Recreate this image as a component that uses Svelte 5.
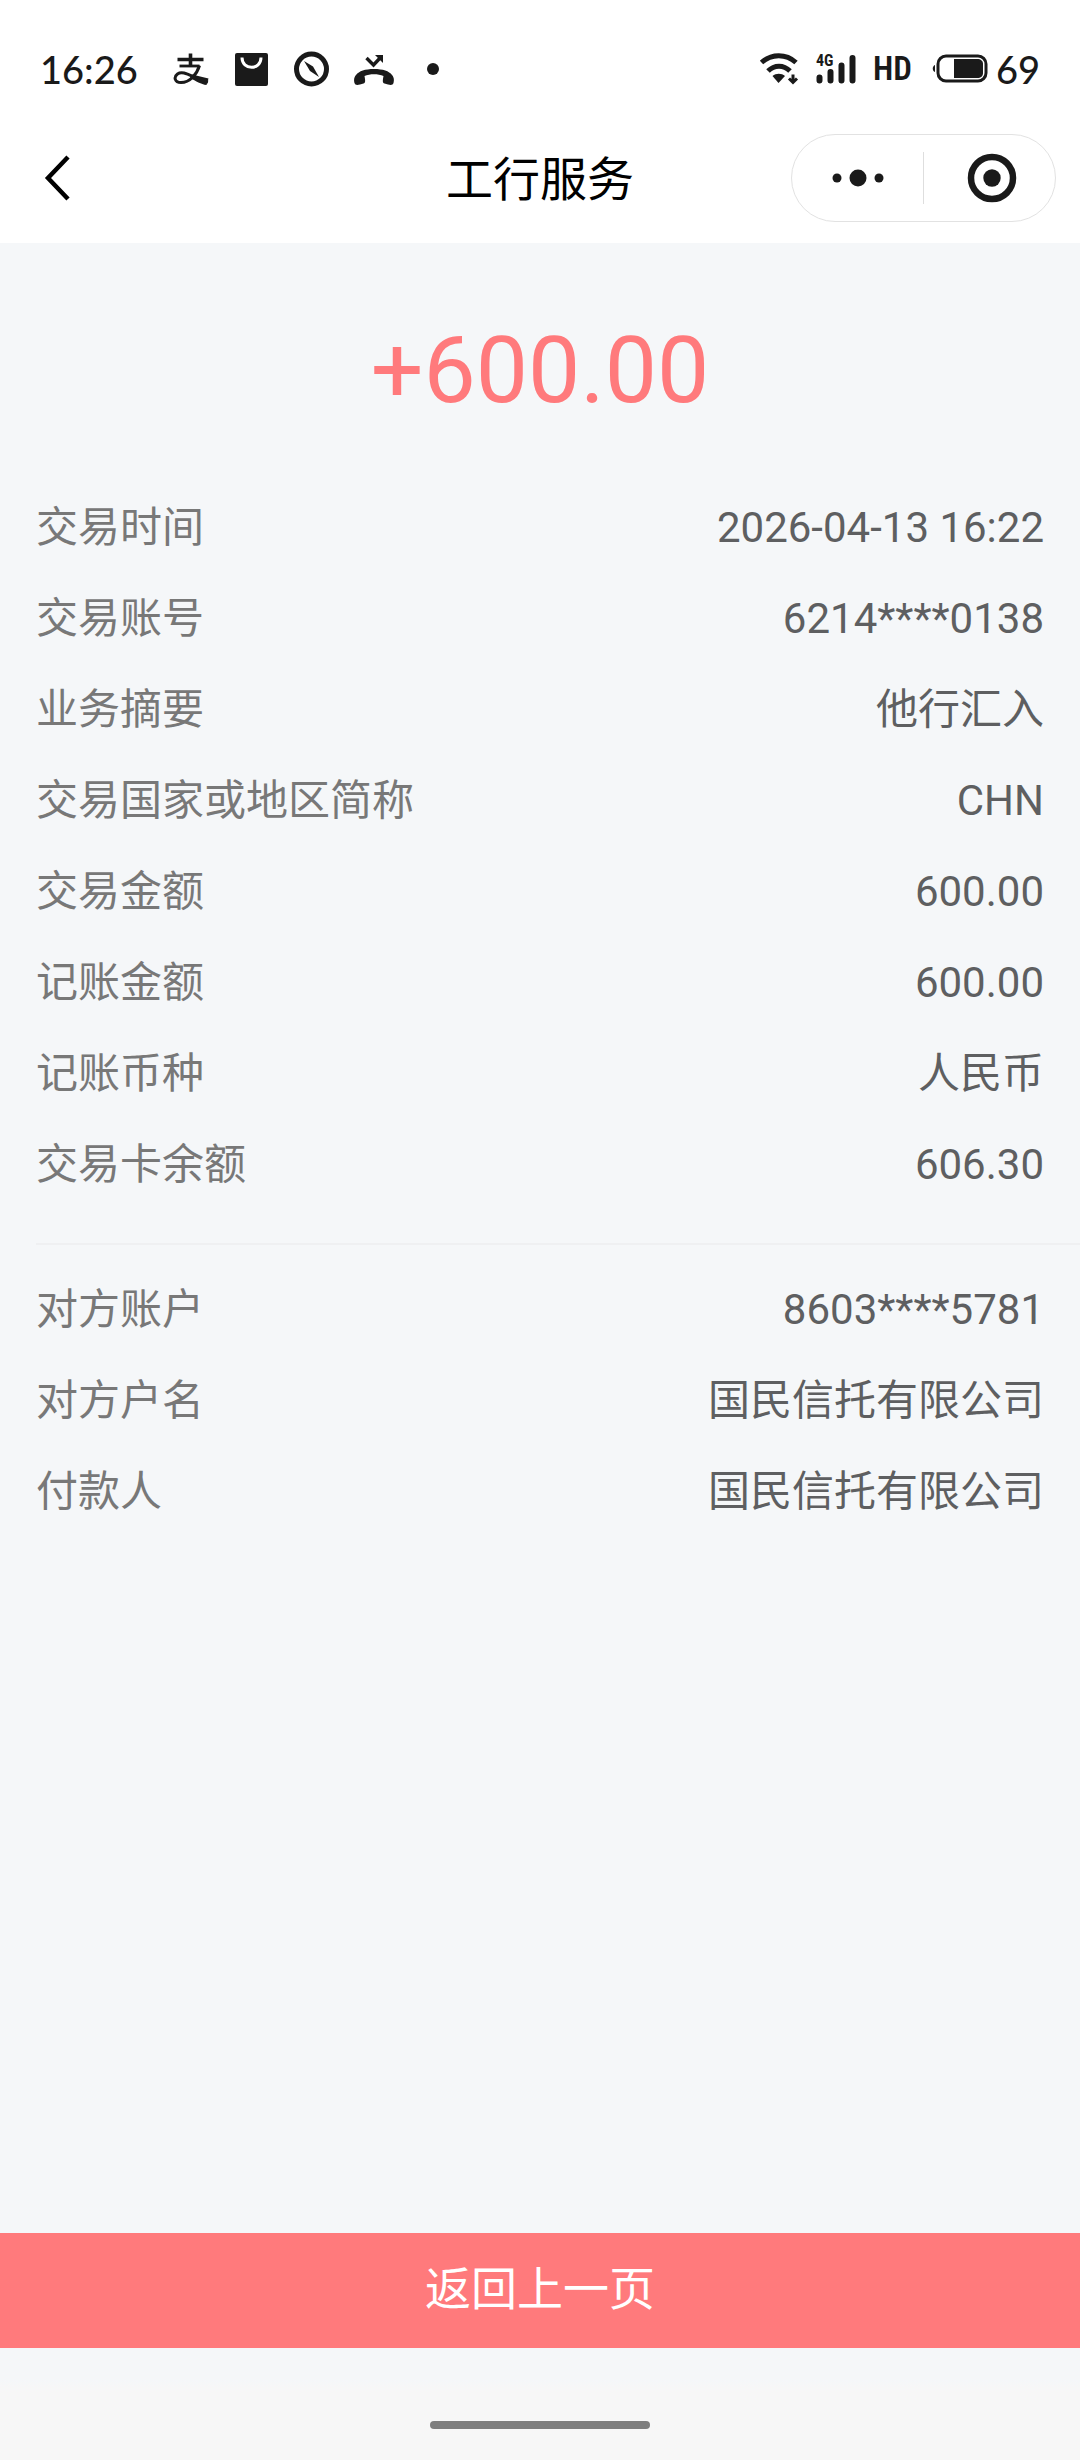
<script lang="ts">
  interface Row {
    label: string
    value: string
  }

  const title = '工行服务'
  const amount = '+600.00'

  const transactionRows: Row[] = [
    { label: '交易时间', value: '2026-04-13 16:22' },
    { label: '交易账号', value: '6214****0138' },
    { label: '业务摘要', value: '他行汇入' },
    { label: '交易国家或地区简称', value: 'CHN' },
    { label: '交易金额', value: '600.00' },
    { label: '记账金额', value: '600.00' },
    { label: '记账币种', value: '人民币' },
    { label: '交易卡余额', value: '606.30' }
  ]

  const counterpartyRows: Row[] = [
    { label: '对方账户', value: '8603****5781' },
    { label: '对方户名', value: '国民信托有限公司' },
    { label: '付款人', value: '国民信托有限公司' }
  ]

  function goBack() {
    history.back()
  }
</script>

{#snippet rowList(rows: Row[])}
  <dl class="rows">
    {#each rows as row (row.label)}
      <div class="row">
        <dt>{row.label}</dt>
        <dd>{row.value}</dd>
      </div>
    {/each}
  </dl>
{/snippet}

<div class="page">
  <div class="status-bar">
    <div class="status-left">
      <span class="clock">16:26</span>
      <svg width="36" height="36" viewBox="0 0 36 36" fill="none" stroke="#1a1a1a" aria-hidden="true">
        <path d="M4.500 8.500h26M17.500 2.500v13" stroke-width="3.600" />
        <path d="M6.500 15h20" stroke-width="2.800" />
        <path
          d="M26.500 14.500C24 23 17 31.500 8 31.500C1.500 31.500 0.500 26 4.500 23C11 18.500 20 27.500 35 31"
          stroke-width="3"
        />
        <path d="M19 23.500L35.500 27.500L33.500 34C28 33.500 23 30 17 27Z" fill="#1a1a1a" stroke="none" />
      </svg>
      <svg width="36" height="36" viewBox="0 0 36 36" aria-hidden="true">
        <rect x="2" y="2" width="33" height="33" rx="2" fill="#1a1a1a" />
        <path d="M9 6.500c0 13 19 13 19 0" fill="none" stroke="#fff" stroke-width="3" />
      </svg>
      <svg width="36" height="36" viewBox="0 0 36 36" aria-hidden="true">
        <circle cx="18.500" cy="18" r="15" fill="none" stroke="#1a1a1a" stroke-width="5" />
        <path d="M11 10L20 15.500L26 26L17 20Z" fill="#1a1a1a" />
      </svg>
      <svg width="42" height="36" viewBox="0 0 42 36" aria-hidden="true">
        <path
          d="M21 18C30 18 36 20 39 24C41.500 27 41 30 40.500 32C40 34 38 34.500 35 33.500L31.500 32.500C29.500 32 29.500 30 30.500 25C25 22.500 17 22.500 11.500 25C12.500 30 12.500 32 10.500 32.500L7 33.500C4 34.500 2 34 1.500 32C1 30 0.500 27 3 24C6 20 12 18 21 18Z"
          fill="#1a1a1a"
        />
        <path d="M13.500 7l7 7L28 6" fill="none" stroke="#1a1a1a" stroke-width="3.400" />
        <path d="M22 4h8v8Z" fill="#1a1a1a" />
      </svg>
      <span class="more-dot"></span>
    </div>

    <div class="status-right">
      <svg width="40" height="36" viewBox="0 0 40 36" fill="none" aria-hidden="true">
        <path d="M2.500 11.500C12.500 2.500 27 2.500 37 11.500" stroke="#1a1a1a" stroke-width="5" />
        <path d="M9 20C15.500 13.500 24.500 13.500 31 20" stroke="#1a1a1a" stroke-width="5" />
        <path d="M13.500 25C17 22 22.500 22 26 25L19.500 32Z" fill="#1a1a1a" />
        <path d="M34 23.500v6M30 27.500l4 4l4-4" stroke="#1a1a1a" stroke-width="3" />
      </svg>
      <svg width="42" height="36" viewBox="0 0 42 36" aria-hidden="true">
        <g stroke="#1a1a1a" stroke-width="6" stroke-linecap="round">
          <path d="M4.500 26.500v3M15.500 21v8.500M26.500 14.500v15M37.500 7v22.500" />
        </g>
        <text x="1" y="15" class="network">4G</text>
      </svg>
      <span class="hd">HD</span>
      <svg class="battery" width="56" height="36" viewBox="0 0 56 36" aria-hidden="true">
        <rect x="6" y="5" width="48" height="25" rx="8" fill="none" stroke="#1a1a1a" stroke-width="3" />
        <path d="M22 8h23c4 0 6 2 6 5v9c0 3-2 5-6 5H22Z" fill="#1a1a1a" />
        <path d="M3 14c-3 1-3 6 0 7Z" fill="#1a1a1a" />
      </svg>
      <span class="clock">69</span>
    </div>
  </div>

  <header class="nav-bar">
    <button type="button" class="back" aria-label="返回" onclick={goBack}>
      <svg width="30" height="50" viewBox="0 0 30 50" fill="none" aria-hidden="true">
        <path d="M24 4L4 25L24 46" stroke="#000" stroke-width="4.500" />
      </svg>
    </button>
    <h1>{title}</h1>
    <div class="capsule">
      <button type="button" aria-label="更多">
        <svg width="52" height="18" viewBox="0 0 52 18" fill="#1a1a1a" aria-hidden="true">
          <circle cx="5" cy="9" r="4.500" />
          <circle cx="26" cy="9" r="8.500" />
          <circle cx="47" cy="9" r="4.500" />
        </svg>
      </button>
      <span class="capsule-divider"></span>
      <button type="button" aria-label="关闭">
        <svg width="54" height="50" viewBox="0 0 54 50" aria-hidden="true">
          <circle cx="29" cy="25" r="21" fill="none" stroke="#1a1a1a" stroke-width="6.500" />
          <circle cx="29" cy="25" r="8.700" fill="#1a1a1a" />
        </svg>
      </button>
    </div>
  </header>

  <main>
    <p class="amount">{amount}</p>
    {@render rowList(transactionRows)}
    <hr />
    {@render rowList(counterpartyRows)}
  </main>

  <button type="button" class="return" onclick={goBack}>返回上一页</button>

  <footer>
    <span class="home-indicator"></span>
  </footer>
</div>

<style>
  :global(body) {
    margin: 0;
    background: #f5f7f9;
  }

  .page {
    min-height: 100vh;
    display: flex;
    flex-direction: column;
    background: #f5f7f9;
    font-family: Roboto, 'Noto Sans CJK SC', sans-serif;
  }

  button {
    border: none;
    padding: 0;
    background: none;
    font-family: inherit;
    cursor: pointer;
  }

  svg {
    display: block;
  }

  .status-bar {
    box-sizing: border-box;
    height: 112px;
    padding: 26px 40px 0;
    display: flex;
    align-items: center;
    justify-content: space-between;
    background: #fff;
    color: #1a1a1a;
  }

  .status-left {
    display: flex;
    align-items: center;
    gap: 24px;
  }

  .status-left .clock {
    width: 109px;
  }

  .status-right {
    display: flex;
    align-items: center;
    gap: 16px;
  }

  .clock {
    font-family: Lato, sans-serif;
    font-size: 38px;
    font-weight: 500;
    line-height: 48px;
  }

  .more-dot {
    width: 12px;
    height: 12px;
    margin-left: 8px;
    border-radius: 50%;
    background: #1a1a1a;
  }

  .network {
    font-family: 'Roboto Condensed', Roboto, sans-serif;
    font-size: 16px;
    font-weight: 700;
    fill: #1a1a1a;
  }

  .hd {
    margin-right: 4px;
    font-family: 'Roboto Condensed', Roboto, sans-serif;
    font-size: 33px;
    font-weight: 600;
    line-height: 36px;
  }

  .battery {
    margin-right: -8px;
  }

  .nav-bar {
    height: 131px;
    padding: 0 24px;
    display: grid;
    grid-template-columns: 1fr auto 1fr;
    align-items: center;
    background: #fff;
  }

  .back {
    justify-self: start;
    margin-left: 20px;
  }

  h1 {
    margin: 0;
    padding-top: 4px;
    font-size: 47px;
    font-weight: 400;
    line-height: 64px;
    color: #000;
  }

  .capsule {
    box-sizing: border-box;
    justify-self: end;
    width: 265px;
    height: 88px;
    display: flex;
    align-items: center;
    border: 1px solid #e2e2e2;
    border-radius: 44px;
  }

  .capsule button {
    flex: 1;
    height: 100%;
    display: flex;
    align-items: center;
    justify-content: center;
  }

  .capsule-divider {
    width: 1px;
    height: 52px;
    background: #dedede;
  }

  main {
    flex: 1;
    padding-top: 73px;
  }

  .amount {
    margin: 0 0 56px;
    text-align: center;
    font-size: 93px;
    line-height: 110px;
    color: #ff7a7c;
  }

  .rows {
    margin: 0;
    padding: 0 36px;
  }

  .row {
    display: flex;
    align-items: center;
    justify-content: space-between;
    font-size: 42px;
    line-height: 91px;
  }

  dt {
    color: #787878;
  }

  dd {
    margin: 0;
    color: #5e5f61;
  }

  hr {
    height: 2px;
    margin: 33px 0 19px 36px;
    border: none;
    background: #eff0f2;
  }

  .return {
    height: 115px;
    padding-bottom: 4px;
    background: #ff7a7c;
    color: #fff;
    font-size: 46px;
    line-height: 64px;
  }

  footer {
    height: 112px;
    display: flex;
    align-items: flex-end;
    justify-content: center;
    background: linear-gradient(#f5f7f9 32px, #f7f7f7 40px);
  }

  .home-indicator {
    width: 220px;
    height: 8px;
    margin-bottom: 31px;
    border-radius: 4px;
    background: #7e7e7e;
  }
</style>
